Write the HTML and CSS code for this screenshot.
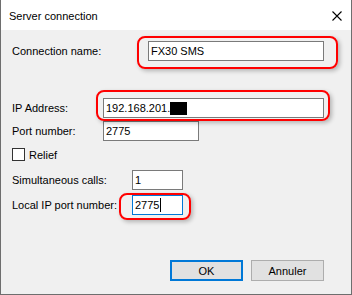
FILE: index.html
```
<html>

<head>
    <link rel="stylesheet" href="styles.css">
</head>

<body>
    <div class="window">
        <div class="titlebar">
            <span class="title">Server connection</span>
            <svg class="close" width="10" height="10" viewBox="0 0 10 10">
                <path d="M0.5 0.5 L9.5 9.5 M9.5 0.5 L0.5 9.5" stroke="#000" stroke-width="1.1" fill="none" />
            </svg>
        </div>

        <div class="content">
            <div class="field first">
                <span class="label w-name">Connection name:</span>
                <div class="textbox tb-name">FX30 SMS</div>
            </div>

            <div class="field ip">
                <span class="label w-ip">IP Address:</span>
                <div class="textbox tb-ip">192.168.201.<span class="masked"></span></div>
            </div>

            <div class="field port">
                <span class="label w-ip">Port number:</span>
                <div class="textbox tb-port">2775</div>
            </div>

            <div class="check-row">
                <span class="checkbox"></span>
                <span class="check-label">Relief</span>
            </div>

            <div class="field calls">
                <span class="label w-calls">Simultaneous calls:</span>
                <div class="textbox tb-small">1</div>
            </div>

            <div class="field local">
                <span class="label w-calls">Local IP port number:</span>
                <div class="textbox tb-small focused">2775<span class="caret"></span></div>
            </div>

            <div class="buttons">
                <button class="btn default">OK</button>
                <button class="btn">Annuler</button>
            </div>
        </div>

        <!-- annotation marks drawn over the dialog -->
        <div class="mark mark-name"></div>
        <div class="mark mark-ip"></div>
        <div class="mark mark-local"></div>
    </div>
</body>

</html>
```

FILE: styles.css
```
body {
    margin: 0;
    padding: 0;
    font-family: 'Liberation Sans', Arial, sans-serif;
    font-size: 11px;
    color: #000;
}

.window {
    position: relative;
    width: 352px;
    height: 295px;
    box-sizing: border-box;
    border: 1px solid #6e6e6e;
    border-top: none;
    background-color: #f0f0f0;
    display: flex;
    flex-direction: column;
}

.titlebar {
    height: 30px;
    background-color: #fff;
    display: flex;
    align-items: center;
    justify-content: space-between;
    padding: 1px 9px 0 8px;
    box-sizing: border-box;
}

.title {
    font-size: 11px;
}

.content {
    flex: 1;
    padding: 11px 27px 0 11px;
}

.field {
    display: flex;
    align-items: center;
}

.label {
    flex-shrink: 0;
}

.w-name {
    width: 136px;
}

.w-ip {
    width: 91px;
}

.w-calls {
    width: 120px;
}

.ip {
    margin-top: 37px;
}

.port {
    margin-top: 3px;
}

.calls {
    margin-top: 9px;
}

.local {
    margin-top: 5px;
}

.textbox {
    height: 20px;
    box-sizing: border-box;
    border: 1px solid #7a7a7a;
    background-color: #fff;
    padding-left: 2px;
    line-height: 18px;
    display: flex;
    align-items: center;
}

.tb-name {
    width: 177px;
}

.tb-ip {
    width: 221px;
}

.tb-port {
    width: 96px;
}

.tb-small {
    width: 51px;
}

.focused {
    border-color: #0078d7;
}

.masked {
    display: inline-block;
    width: 17px;
    height: 13px;
    background-color: #000;
}

.caret {
    display: inline-block;
    width: 1px;
    height: 14px;
    background-color: #000;
    margin-left: 1px;
}

.check-row {
    display: flex;
    align-items: center;
    margin-top: 7px;
    height: 13px;
}

.checkbox {
    width: 13px;
    height: 13px;
    box-sizing: border-box;
    border: 1px solid #333;
    background-color: #fff;
}

.check-label {
    margin-left: 4px;
}

.buttons {
    display: flex;
    justify-content: flex-end;
    gap: 8px;
    margin-top: 45px;
}

.btn {
    width: 73px;
    height: 21px;
    box-sizing: border-box;
    border: 1px solid #adadad;
    background-color: #e1e1e1;
    font-family: 'Liberation Sans', Arial, sans-serif;
    font-size: 11px;
    padding: 0;
    color: #000;
}

.btn.default {
    border: 2px solid #0078d7;
}

.mark {
    position: absolute;
    box-sizing: border-box;
    border: 2px solid #ff0000;
    border-radius: 8px;
    box-shadow: 2px 2px 4px rgba(0, 0, 0, 0.25);
}

.mark-name {
    left: 136px;
    top: 36px;
    width: 201px;
    height: 33px;
}

.mark-ip {
    left: 95px;
    top: 90px;
    width: 234px;
    height: 31px;
}

.mark-local {
    left: 118px;
    top: 193px;
    width: 72px;
    height: 27px;
}
```
